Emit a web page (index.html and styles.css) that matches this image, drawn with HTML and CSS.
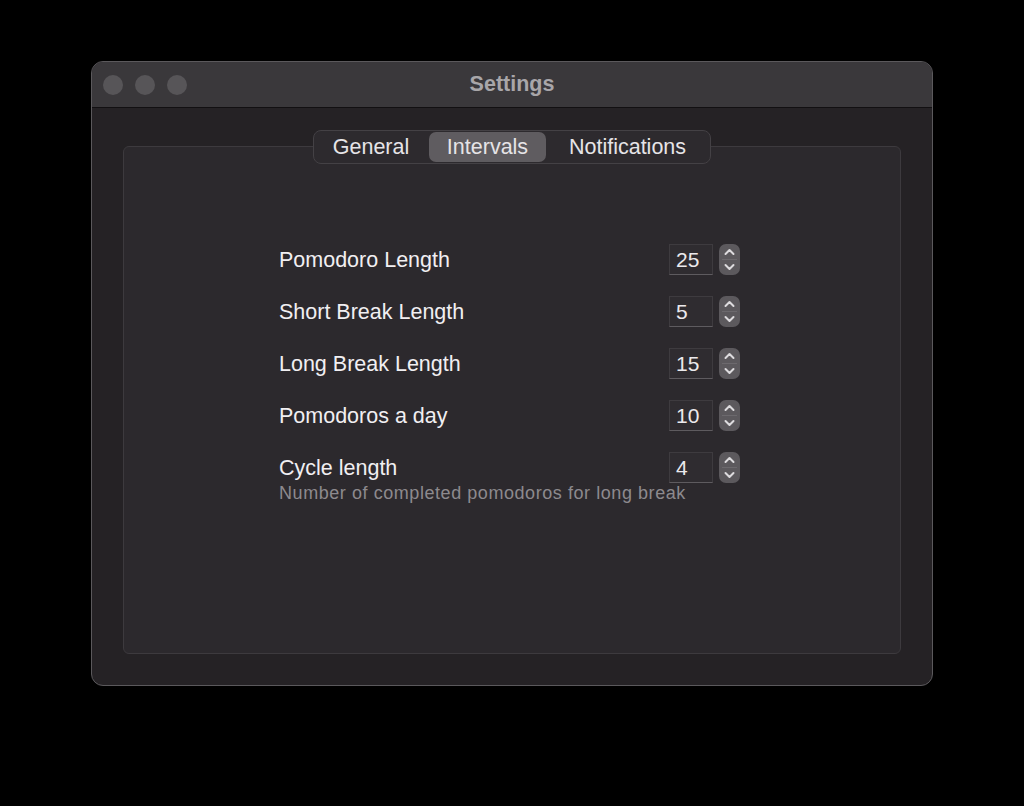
FILE: index.html
```html
<!DOCTYPE html>
<html>
<head>
<meta charset="utf-8">
<link rel="stylesheet" href="styles.css">
</head>
<body>
<div class="window">
  <div class="titlebar">
    <div class="lights"><span class="light"></span><span class="light"></span><span class="light"></span></div>
    <div class="title">Settings</div>
  </div>
  <div class="content">
    <div class="tabs">
      <div class="tab tab-general">General</div>
      <div class="tab tab-intervals selected">Intervals</div>
      <div class="tab tab-notifications">Notifications</div>
    </div>
    <div class="box">
      <div class="form">
        <div class="row">
          <div class="label">Pomodoro Length</div>
          <div class="stepper-group"><div class="field">25</div><div class="stepper"><svg width="21" height="31" viewBox="0 0 21 31"><path d="M6.5 10 L10.5 6 L14.5 10" class="chev"/><line x1="3" y1="15.5" x2="18" y2="15.5" class="div"/><path d="M6.5 21 L10.5 25 L14.5 21" class="chev"/></svg></div></div>
        </div>
        <div class="row">
          <div class="label">Short Break Length</div>
          <div class="stepper-group"><div class="field">5</div><div class="stepper"><svg width="21" height="31" viewBox="0 0 21 31"><path d="M6.5 10 L10.5 6 L14.5 10" class="chev"/><line x1="3" y1="15.5" x2="18" y2="15.5" class="div"/><path d="M6.5 21 L10.5 25 L14.5 21" class="chev"/></svg></div></div>
        </div>
        <div class="row">
          <div class="label">Long Break Length</div>
          <div class="stepper-group"><div class="field">15</div><div class="stepper"><svg width="21" height="31" viewBox="0 0 21 31"><path d="M6.5 10 L10.5 6 L14.5 10" class="chev"/><line x1="3" y1="15.5" x2="18" y2="15.5" class="div"/><path d="M6.5 21 L10.5 25 L14.5 21" class="chev"/></svg></div></div>
        </div>
        <div class="row">
          <div class="label">Pomodoros a day</div>
          <div class="stepper-group"><div class="field">10</div><div class="stepper"><svg width="21" height="31" viewBox="0 0 21 31"><path d="M6.5 10 L10.5 6 L14.5 10" class="chev"/><line x1="3" y1="15.5" x2="18" y2="15.5" class="div"/><path d="M6.5 21 L10.5 25 L14.5 21" class="chev"/></svg></div></div>
        </div>
        <div class="group">
          <div class="row">
            <div class="label">Cycle length</div>
            <div class="stepper-group"><div class="field">4</div><div class="stepper"><svg width="21" height="31" viewBox="0 0 21 31"><path d="M6.5 10 L10.5 6 L14.5 10" class="chev"/><line x1="3" y1="15.5" x2="18" y2="15.5" class="div"/><path d="M6.5 21 L10.5 25 L14.5 21" class="chev"/></svg></div></div>
          </div>
          <div class="hint">Number of completed pomodoros for long break</div>
        </div>
      </div>
    </div>
  </div>
</div>
</body>
</html>
```

FILE: styles.css
```css
html, body {
  margin: 0;
  padding: 0;
  background: #000;
}
body {
  width: 1024px;
  height: 806px;
  overflow: hidden;
  font-family: "Liberation Sans", Arial, sans-serif;
}
.window {
  margin: 61px 0 0 91px;
  width: 840px;
  height: 623px;
  border: 1px solid #5b595c;
  border-radius: 12px;
  overflow: hidden;
  background: #252225;
  display: flex;
  flex-direction: column;
}
.titlebar {
  height: 45px;
  background: #3a383b;
  border-bottom: 1px solid #121012;
  display: flex;
  align-items: center;
  position: relative;
  flex: none;
}
.lights {
  display: flex;
  gap: 12px;
  padding-left: 11px;
}
.light {
  width: 20px;
  height: 20px;
  border-radius: 50%;
  background: #575558;
}
.title {
  position: absolute;
  left: 0;
  right: 0;
  top: 0;
  bottom: 0;
  display: flex;
  align-items: center;
  justify-content: center;
  color: #a8a6a9;
  font-weight: bold;
  font-size: 21.5px;
  padding-bottom: 1px;
}
.content {
  flex: 1;
  display: flex;
  flex-direction: column;
  align-items: center;
  padding: 22px 31px 31px;
}
.tabs {
  position: relative;
  z-index: 1;
  display: flex;
  height: 30px;
  padding: 1px;
  background: #2d2a2e;
  border: 1px solid #444145;
  border-radius: 8px;
}
.tab {
  height: 30px;
  display: flex;
  align-items: center;
  justify-content: center;
  color: #e6e4e7;
  font-size: 21.5px;
  border-radius: 7px;
}
.tab-general { width: 114px; padding-right: 2px; box-sizing: border-box; }
.tab-intervals { width: 117px; }
.tab-notifications { width: 163px; }
.tab.selected {
  background: #5f5c60;
}
.box {
  align-self: stretch;
  flex: 1;
  margin-top: -18px;
  background: #2c292d;
  border: 1px solid #3d3a3e;
  border-radius: 6px;
  padding: 96px 0 0 155px;
}
.form {
  width: 461px;
  display: flex;
  flex-direction: column;
  gap: 20px;
}
.row {
  height: 32px;
  display: flex;
  align-items: center;
  justify-content: space-between;
}
.label {
  color: #f1eff2;
  font-size: 21.5px;
  padding-top: 3px;
}
.stepper-group {
  display: flex;
  align-items: center;
  gap: 6px;
}
.field {
  width: 36px;
  padding-left: 6px;
  background: #2f2c30;
  border: 1px solid #3e3b3f;
  border-bottom-color: #5e5b5f;
  color: #ebe9ec;
  font-size: 21px;
  display: flex;
  align-items: center;
  padding-top: 2px;
  box-sizing: content-box;
  height: 27px;
}
.stepper {
  width: 21px;
  height: 31px;
  border-radius: 7px;
  background: #5c595d;
  display: flex;
}
.chev {
  fill: none;
  stroke: #dddbde;
  stroke-width: 2;
  stroke-linecap: round;
  stroke-linejoin: round;
}
.div {
  stroke: #6c696d;
  stroke-width: 1;
}
.hint {
  color: #8d8a8e;
  font-size: 18px;
  letter-spacing: 0.56px;
  margin-top: 0;
}
```
